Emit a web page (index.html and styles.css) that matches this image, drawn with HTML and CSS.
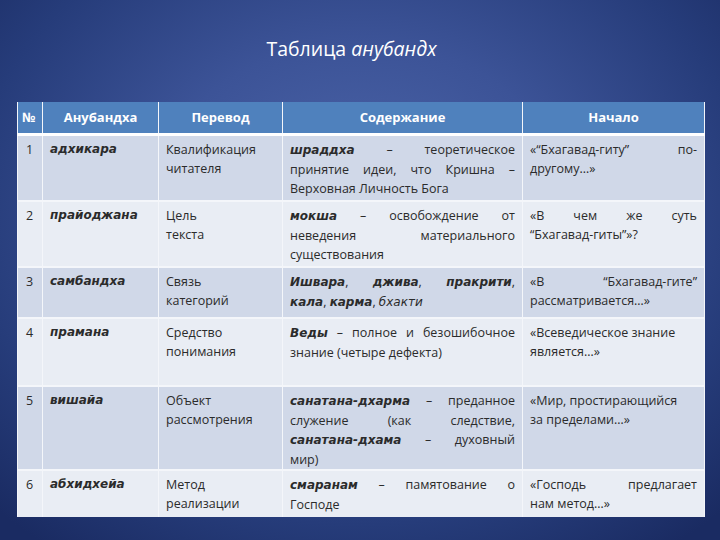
FILE: index.html
```html
<!DOCTYPE html>
<html lang="ru">
<head>
<meta charset="utf-8">
<link rel="stylesheet" href="styles.css">
</head>
<body>
<div class="slide">
  <h1 class="title">Таблица <i>анубандх</i></h1>
  <table class="tbl">
    <colgroup>
      <col class="c1"><col class="c2"><col class="c3"><col class="c4"><col class="c5">
    </colgroup>
    <thead>
      <tr class="hd">
        <th class="num">№</th>
        <th>Анубандха</th>
        <th>Перевод</th>
        <th>Содержание</th>
        <th>Начало</th>
      </tr>
    </thead>
    <tbody>
      <tr class="odd r1">
        <td class="num">1</td>
        <td class="term">адхикара</td>
        <td>Квалификация<br>читателя</td>
        <td><span class="ln"><b>шраддха</b> – теоретическое</span><span class="ln">принятие идеи, что Кришна –</span>Верховная Личность Бога</td>
        <td><span class="ln">«“Бхагавад-гиту” по-</span>другому…»</td>
      </tr>
      <tr class="even r2">
        <td class="num">2</td>
        <td class="term">прайоджана</td>
        <td>Цель<br>текста</td>
        <td><span class="ln"><b>мокша</b> – освобождение от</span><span class="ln">неведения материального</span>существования</td>
        <td><span class="ln">«В чем же суть</span>“Бхагавад-гиты”»?</td>
      </tr>
      <tr class="odd r3">
        <td class="num">3</td>
        <td class="term">самбандха</td>
        <td>Связь<br>категорий</td>
        <td><span class="ln"><b>Ишвара</b>, <b>джива</b>, <b>пракрити</b>,</span><b>кала</b>, <b>карма</b>, <em>бхакти</em></td>
        <td><span class="ln">«В “Бхагавад-гите”</span>рассматривается…»</td>
      </tr>
      <tr class="even r4">
        <td class="num">4</td>
        <td class="term">прамана</td>
        <td>Средство<br>понимания</td>
        <td><span class="ln"><b>Веды</b> – полное и безошибочное</span>знание (четыре дефекта)</td>
        <td>«Всеведическое знание<br>является…»</td>
      </tr>
      <tr class="odd r5">
        <td class="num">5</td>
        <td class="term">вишайа</td>
        <td>Объект<br>рассмотрения</td>
        <td><span class="ln"><b>санатана-дхарма</b> – преданное</span><span class="ln">служение (как следствие,</span><span class="ln"><b>санатана-дхама</b> – духовный</span>мир)</td>
        <td>«Мир, простирающийся<br>за пределами…»</td>
      </tr>
      <tr class="even r6">
        <td class="num">6</td>
        <td class="term">абхидхейа</td>
        <td>Метод<br>реализации</td>
        <td><span class="ln"><b>смаранам</b> – памятование о</span>Господе</td>
        <td><span class="ln">«Господь предлагает</span>нам метод…»</td>
      </tr>
    </tbody>
  </table>
</div>
</body>
</html>
```

FILE: styles.css
```css
html, body {
  margin: 0;
  padding: 0;
}
body {
  width: 720px;
  height: 540px;
  overflow: hidden;
  font-family: "Open Sans", "Noto Sans", sans-serif;
}
.slide {
  width: 720px;
  height: 540px;
  box-sizing: border-box;
  padding: 35px 0 0 17px;
  background: radial-gradient(ellipse 520px 420px at 360px 210px, #4d66aa 0%, #3c5397 40%, #263c7a 75%, #1a2b62 100%);
}
.title {
  margin: 0;
  width: 669px;
  text-align: center;
  color: #ffffff;
  font-weight: normal;
  font-size: 19.5px;
  line-height: 28px;
  height: 67px;
}
.title i {
  font-style: italic;
}
.tbl {
  width: 687px;
  border-collapse: collapse;
  table-layout: fixed;
  color: #2b2b2b;
  font-size: 12.5px;
  line-height: 19px;
}
.c1 { width: 25px; }
.c2 { width: 116px; }
.c3 { width: 124px; }
.c4 { width: 240px; }
.c5 { width: 182px; }
.tbl th, .tbl td {
  border-left: 1px solid #f4f6fa;
  border-right: 1px solid #f4f6fa;
  vertical-align: top;
  padding: 4px 7px 0 7px;
}
.hd th {
  background: #4f81bd;
  color: #ffffff;
  font-weight: bold;
  font-size: 13px;
  height: 31px;
  padding: 0 4px;
  vertical-align: middle;
  text-align: center;
  border-bottom: 3px solid #ffffff;
}
.hd th.num {
  text-align: left;
  padding-left: 4px;
}
.tbl td.num {
  padding-left: 8px;
  padding-right: 2px;
}
.odd td { background: #d0d8e8; }
.even td { background: #e9edf4; }
.tbl tbody tr { border-top: 2px solid #f4f6fa; }
.tbl tbody tr:first-child { border-top: 0; }
.r1 td { height: 60px; }
.r2 td { height: 60px; }
.r3 td { height: 45px; }
.r4 td { height: 62px; }
.r5 td { height: 78px; }
.r6 td { height: 42px; }
.term {
  font-family: "DejaVu Sans", sans-serif;
  font-weight: bold;
  font-style: italic;
  font-size: 12px;
}
.tbl td b {
  font-family: "DejaVu Sans", sans-serif;
  font-weight: bold;
  font-style: italic;
  font-size: 12px;
}
.tbl td em {
  font-family: "DejaVu Sans", sans-serif;
  font-style: italic;
  font-size: 12px;
}
.ln {
  display: block;
  text-align: justify;
  text-align-last: justify;
}
```
